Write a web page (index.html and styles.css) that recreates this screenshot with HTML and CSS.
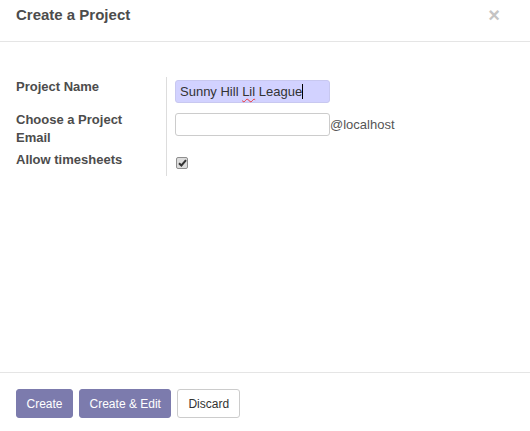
FILE: index.html
```html
<!DOCTYPE html>
<html lang="en">
<head>
    <meta charset="UTF-8">
    <meta name="viewport" content="width=device-width, initial-scale=1.0">
    <title>Create a Project</title>
    <link rel="stylesheet" href="styles.css">
</head>
<body>
    <div class="modal">
        <header class="modal-header">
            <h4 class="modal-title">Create a Project</h4>
            <span class="close">&times;</span>
        </header>

        <div class="modal-body">
            <div class="form-row">
                <label class="field-label">Project Name</label>
                <div class="field-value">
                    <div class="input input-filled">Sunny Hill <span class="misspelled">Lil</span> League<span class="caret"></span></div>
                </div>
            </div>
            <div class="form-row row-email">
                <label class="field-label">Choose a Project Email</label>
                <div class="field-value">
                    <div class="input"></div>
                    <span class="suffix">@localhost</span>
                </div>
            </div>
            <div class="form-row row-check">
                <label class="field-label">Allow timesheets</label>
                <div class="field-value">
                    <span class="checkbox">
                        <svg width="9" height="8" viewBox="0 0 9 8"><path d="M1 4.2 L3.4 6.5 L8 1.2" fill="none" stroke="#333" stroke-width="2"/></svg>
                    </span>
                </div>
            </div>
        </div>

        <footer class="modal-footer">
            <button class="btn btn-primary">Create</button>
            <button class="btn btn-primary">Create &amp; Edit</button>
            <button class="btn btn-secondary">Discard</button>
        </footer>
    </div>
</body>
</html>
```

FILE: styles.css
```css
* {
    margin: 0;
    padding: 0;
    box-sizing: border-box;
}

body {
    background: #fff;
    font-family: 'Liberation Sans', Arial, sans-serif;
    font-size: 13px;
    color: #4c4c4c;
}

.modal {
    width: 530px;
    height: 431px;
    display: flex;
    flex-direction: column;
}

.modal-header {
    height: 42px;
    padding: 6px 30px 0 16px;
    border-bottom: 1px solid #e5e5e5;
    display: flex;
    justify-content: space-between;
    align-items: flex-start;
}

.modal-title {
    font-size: 15px;
    line-height: 18px;
    font-weight: bold;
    color: #4c4c4c;
}

.close {
    font-size: 20px;
    line-height: 18px;
    font-weight: bold;
    color: #c4c4c4;
}

.modal-body {
    flex: 1;
    padding: 35px 16px 0;
}

.form-row {
    display: flex;
    height: 33px;
}

.row-email {
    height: 40px;
}

.row-check {
    height: 26px;
}

.field-label {
    width: 150px;
    padding: 1px 20px 0 0;
    font-weight: bold;
    line-height: 18px;
}

.field-value {
    border-left: 1px solid #ddd;
    padding: 3px 0 0 8px;
    display: flex;
    align-items: flex-start;
}

.input {
    width: 155px;
    height: 23px;
    border: 1px solid #ccc;
    border-radius: 3px;
    padding: 0 4px;
    font-size: 13px;
    line-height: 21px;
    color: #333;
}

.input-filled {
    background: #d2d2ff;
    border-color: #c8c8f0;
}

.misspelled {
    text-decoration: underline wavy #e33;
    text-decoration-thickness: 1px;
    text-underline-offset: 2px;
}

.caret {
    display: inline-block;
    width: 1px;
    height: 15px;
    background: #000;
    vertical-align: -3px;
}

.suffix {
    font-size: 13px;
    line-height: 23px;
    color: #555;
}

.row-check .field-value {
    padding-top: 7px;
    padding-left: 9px;
}

.checkbox {
    width: 12px;
    height: 12px;
    border: 1px solid #8f8f8f;
    border-radius: 2px;
    background: #dcdcdc;
    display: flex;
    align-items: center;
    justify-content: center;
}

.checkbox svg {
    display: block;
}

.modal-footer {
    height: 59px;
    border-top: 1px solid #e5e5e5;
    padding: 16px 16px 0;
    display: flex;
    gap: 6px;
    align-items: flex-start;
}

.btn {
    height: 29px;
    padding: 0 10px;
    border-radius: 3px;
    font-family: 'Liberation Sans', Arial, sans-serif;
    font-size: 12px;
    cursor: pointer;
}

.btn-primary {
    background: #7c7bad;
    border: 1px solid #7c7bad;
    color: #fff;
    padding: 0 9.5px;
}

.btn-secondary {
    background: #fff;
    border: 1px solid #ccc;
    color: #333;
}
```
